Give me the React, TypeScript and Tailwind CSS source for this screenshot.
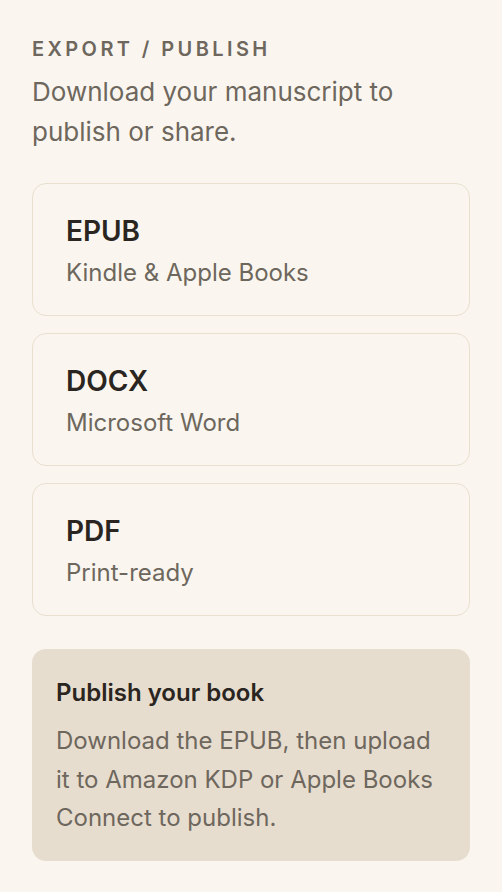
const formats = [
  { name: "EPUB", desc: "Kindle & Apple Books" },
  { name: "DOCX", desc: "Microsoft Word" },
  { name: "PDF", desc: "Print-ready" },
];

const App = () => {
  return (
    <div className="min-h-screen w-full bg-[#faf6ef] px-8 pt-[35px] pb-8 font-['Inter',sans-serif]">
      <div className="text-[20px] leading-[28px] font-semibold tracking-[0.17em] text-[#6e675d]">
        EXPORT / PUBLISH
      </div>
      <p className="mt-[9px] text-[26px] leading-[40px] text-[#6e675d]">
        Download your manuscript to publish or share.
      </p>

      <div className="mt-[31px] flex flex-col gap-[17px]">
        {formats.map((f) => (
          <div
            key={f.name}
            className="rounded-[14px] border-[1.5px] border-[#e8dfcf] px-[33px] pt-[29px] pb-[26px]"
          >
            <div className="text-[28px] leading-[36px] font-semibold text-[#2a2520]">
              {f.name}
            </div>
            <div className="mt-[8px] text-[24px] leading-[32px] text-[#6e675d]">
              {f.desc}
            </div>
          </div>
        ))}
      </div>

      <div className="mt-[33px] rounded-[14px] bg-[#e7ddcf] px-6 pt-[29px] pb-[23px]">
        <div className="text-[24px] leading-[30px] font-semibold text-[#2a2520]">
          Publish your book
        </div>
        <p className="mt-[14px] text-[24px] leading-[38.5px] text-[#6e675d]">
          Download the EPUB, then upload it to Amazon KDP or Apple Books Connect to publish.
        </p>
      </div>
    </div>
  );
};

export default App;
